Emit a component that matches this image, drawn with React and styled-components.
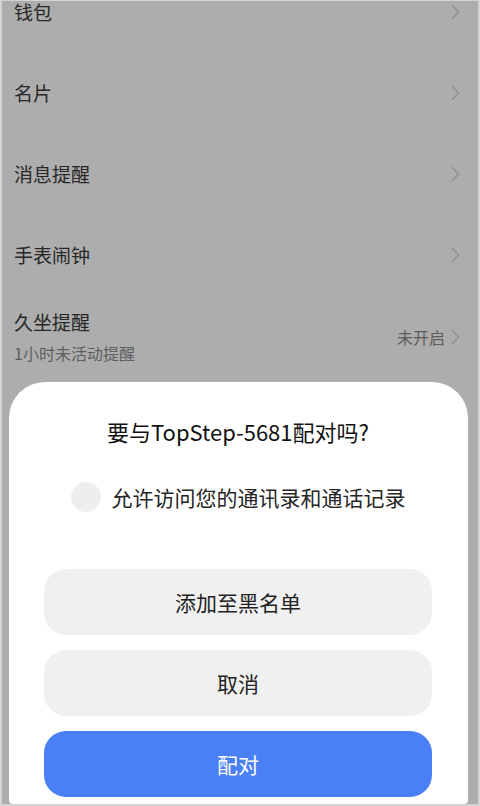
import React from "react";
import styled, { createGlobalStyle } from "styled-components";

const Global = createGlobalStyle`
  html, body { margin: 0; padding: 0; background: #ffffff; }
  body { font-family: "Noto Sans CJK SC", "Noto Sans", sans-serif; }
  * { box-sizing: border-box; }
`;

const Screen = styled.div`
  width: 480px;
  height: 806px;
  border-style: solid;
  border-color: #d3d3d3;
  border-width: 1px 2px 2px 2px;
  background: #adadad;
  position: relative;
  overflow: hidden;
`;

const List = styled.div`
  display: flex;
  flex-direction: column;
  margin-top: -30px;
`;

const Row = styled.div`
  display: flex;
  align-items: center;
  justify-content: space-between;
  min-height: ${(p) => (p.$tall ? 84 : 81)}px;
  padding: ${(p) => (p.$tall ? "14px 18px 15px 12px" : "0 18px 0 12px")};
`;

const Texts = styled.div`
  display: flex;
  flex-direction: column;
`;

const Label = styled.div`
  font-size: 19px;
  line-height: 26px;
  color: #272727;
`;

const Sub = styled.div`
  font-size: 16px;
  line-height: 22px;
  margin-top: 7px;
  color: #5f5f5f;
`;

const Right = styled.div`
  display: flex;
  align-items: center;
  gap: 6px;
  font-size: 16px;
  color: #5c5c5c;
`;

const Chevron = () => (
  <svg width="9" height="16" viewBox="0 0 9 16" fill="none">
    <polyline
      points="1.5,1.5 7.5,8 1.5,14.5"
      stroke="#8f8f8f"
      strokeWidth="1.4"
      strokeLinecap="round"
      strokeLinejoin="round"
    />
  </svg>
);

const Dialog = styled.div`
  position: absolute;
  left: 7px;
  right: 10px;
  top: 381px;
  bottom: 0;
  background: #ffffff;
  border-radius: 36px 36px 4px 4px;
  display: flex;
  flex-direction: column;
  align-items: center;
  padding: 34px 36px 0 35px;
`;

const Title = styled.div`
  font-size: 22px;
  line-height: 30px;
  color: #111111;
  text-align: center;
`;

const CheckRow = styled.div`
  display: flex;
  align-items: center;
  gap: 11px;
  margin-top: 36px;
  height: 30px;
`;

const Circle = styled.div`
  width: 30px;
  height: 30px;
  border-radius: 50%;
  background: #eeeeee;
`;

const CheckText = styled.div`
  font-size: 21px;
  line-height: 28px;
  color: #262626;
`;

const Buttons = styled.div`
  display: flex;
  flex-direction: column;
  gap: 15px;
  margin-top: 57px;
  width: 388px;
`;

const Button = styled.div`
  height: 66px;
  border-radius: 22px;
  background: ${(p) => (p.$primary ? "#4a80f5" : "#f0f0f0")};
  color: ${(p) => (p.$primary ? "#ffffff" : "#222222")};
  display: flex;
  align-items: center;
  justify-content: center;
  font-size: 21px;
`;

export default function App() {
  return (
    <>
      <Global />
      <Screen>
        <List>
          {["钱包", "名片", "消息提醒", "手表闹钟"].map((t) => (
            <Row key={t}>
              <Label>{t}</Label>
              <Chevron />
            </Row>
          ))}
          <Row $tall>
            <Texts>
              <Label>久坐提醒</Label>
              <Sub>1小时未活动提醒</Sub>
            </Texts>
            <Right>
              未开启
              <Chevron />
            </Right>
          </Row>
          <Row $tall>
            <Texts>
              <Label>勿扰模式</Label>
              <Sub>未开启</Sub>
            </Texts>
            <Chevron />
          </Row>
        </List>
        <Dialog>
          <Title>要与TopStep-5681配对吗?</Title>
          <CheckRow>
            <Circle />
            <CheckText>允许访问您的通讯录和通话记录</CheckText>
          </CheckRow>
          <Buttons>
            <Button>添加至黑名单</Button>
            <Button>取消</Button>
            <Button $primary>配对</Button>
          </Buttons>
        </Dialog>
      </Screen>
    </>
  );
}
